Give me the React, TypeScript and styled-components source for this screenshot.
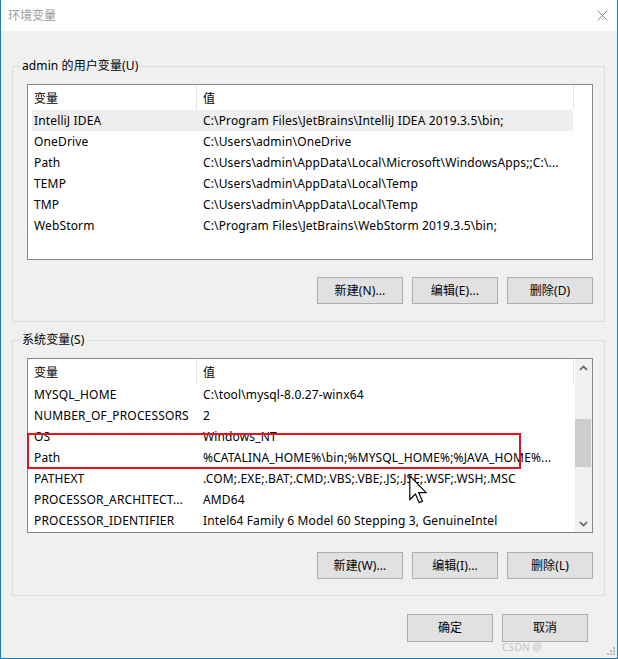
import React from 'react';
import styled, { createGlobalStyle } from 'styled-components';

const GlobalStyle = createGlobalStyle`
  html, body { margin: 0; padding: 0; background: #ffffff; }
  body {
    font-family: "Noto Sans", "Noto Sans CJK SC", sans-serif;
    font-size: 12px;
    color: #000;
  }
  * { box-sizing: border-box; }
`;

const Window = styled.div`
  position: relative;
  width: 618px;
  height: 659px;
  border: 1px solid #1e7dc0;
  border-top: none;
  background: #f0f0f0;
  display: flex;
  flex-direction: column;
  overflow: hidden;
`;

const TitleBar = styled.div`
  flex: none;
  height: 31px;
  background: #ffffff;
  display: flex;
  align-items: center;
  justify-content: space-between;
  padding: 0 9px 0 7px;
`;

const Title = styled.span`
  color: #9a9a9a;
  font-size: 12px;
  line-height: 16px;
`;

const Body = styled.div`
  flex: 1;
  display: flex;
  flex-direction: column;
  padding: 27px 12px 0 11px;
`;

const Group = styled.fieldset<{ $gapTop?: number }>`
  margin: ${(p) => p.$gapTop ?? 0}px 0 0 0;
  padding: 0;
  border: 1px solid #dcdcdc;
  min-width: 0;
`;

const Legend = styled.legend`
  margin-left: 7px;
  padding: 0 2px;
  line-height: 16px;
  font-size: 12px;
  letter-spacing: 0.1px;
`;

const GroupContent = styled.div<{ $padBottom: number }>`
  padding: 10px 11px ${(p) => p.$padBottom}px 14px;
  display: flex;
  flex-direction: column;
`;

const ListBox = styled.div<{ $height: number }>`
  position: relative;
  height: ${(p) => p.$height}px;
  border: 1px solid #828790;
  background: #ffffff;
  display: flex;
`;

const ListMain = styled.div`
  flex: 1;
  display: flex;
  flex-direction: column;
  overflow: hidden;
`;

const HeaderRow = styled.div`
  flex: none;
  height: 25px;
  display: grid;
  grid-template-columns: 169px 377px;
`;

const HeaderCell = styled.div`
  border-right: 1px solid #e5e5e5;
  padding-left: 6px;
  display: flex;
  align-items: center;
  white-space: nowrap;
`;

const Row = styled.div<{ $selected?: boolean }>`
  flex: none;
  height: 21px;
  margin-left: 4px;
  width: 541px;
  display: grid;
  grid-template-columns: 169px 1fr;
  align-items: center;
  background: ${(p) => (p.$selected ? '#efefef' : 'transparent')};
`;

const Cell = styled.div`
  padding-left: 2px;
  white-space: nowrap;
  overflow: hidden;
  line-height: 21px;
  letter-spacing: 0.14px;
`;

const ScrollBar = styled.div`
  flex: none;
  width: 17px;
  margin-left: 1px;
  background: #f0f0f0;
  display: flex;
  flex-direction: column;
`;

const ScrollArrow = styled.div`
  flex: none;
  height: 17px;
  display: flex;
  align-items: center;
  justify-content: center;
`;

const ScrollTrack = styled.div`
  flex: 1;
  display: flex;
  flex-direction: column;
`;

const ScrollThumb = styled.div<{ $top: number; $size: number }>`
  margin-top: ${(p) => p.$top}px;
  height: ${(p) => p.$size}px;
  margin-right: 1px;
  background: #cdcdcd;
`;

const ButtonRow = styled.div<{ $gapTop: number }>`
  margin-top: ${(p) => p.$gapTop}px;
  display: flex;
  justify-content: flex-end;
  gap: 9px;
`;

const Button = styled.button<{ $h?: number }>`
  width: 86px;
  height: ${(p) => p.$h ?? 27}px;
  margin: 0;
  padding: 0;
  background: #e1e1e1;
  border: 1px solid #adadad;
  border-radius: 0;
  font-family: "Noto Sans", "Noto Sans CJK SC", sans-serif;
  font-size: 12px;
  color: #000;
  line-height: 1;
  letter-spacing: 0.1px;
`;

const FooterRow = styled.div`
  margin-top: 18px;
  margin-right: 17px;
  display: flex;
  justify-content: flex-end;
  gap: 9px;
`;

const Highlight = styled.div`
  position: absolute;
  left: -1px;
  top: 74px;
  width: 494px;
  height: 36px;
  border: 2px solid #e8121f;
  pointer-events: none;
`;

const Cursor = styled.svg`
  position: absolute;
  left: 408px;
  top: 475px;
`;

const Watermark = styled.span`
  position: absolute;
  left: 501px;
  top: 641px;
  font-size: 10px;
  line-height: 12px;
  color: #c4c4c4;
  letter-spacing: 0.3px;
`;

const Grip = styled.svg`
  position: absolute;
  right: 2px;
  bottom: 3px;
`;

type Item = { name: string; value: string; selected?: boolean };

const userVars: Item[] = [
  { name: 'IntelliJ IDEA', value: 'C:\\Program Files\\JetBrains\\IntelliJ IDEA 2019.3.5\\bin;', selected: true },
  { name: 'OneDrive', value: 'C:\\Users\\admin\\OneDrive' },
  { name: 'Path', value: 'C:\\Users\\admin\\AppData\\Local\\Microsoft\\WindowsApps;;C:\\...' },
  { name: 'TEMP', value: 'C:\\Users\\admin\\AppData\\Local\\Temp' },
  { name: 'TMP', value: 'C:\\Users\\admin\\AppData\\Local\\Temp' },
  { name: 'WebStorm', value: 'C:\\Program Files\\JetBrains\\WebStorm 2019.3.5\\bin;' },
];

const sysVars: Item[] = [
  { name: 'MYSQL_HOME', value: 'C:\\tool\\mysql-8.0.27-winx64' },
  { name: 'NUMBER_OF_PROCESSORS', value: '2' },
  { name: 'OS', value: 'Windows_NT' },
  { name: 'Path', value: '%CATALINA_HOME%\\bin;%MYSQL_HOME%;%JAVA_HOME%...' },
  { name: 'PATHEXT', value: '.COM;.EXE;.BAT;.CMD;.VBS;.VBE;.JS;.JSE;.WSF;.WSH;.MSC' },
  { name: 'PROCESSOR_ARCHITECT...', value: 'AMD64' },
  { name: 'PROCESSOR_IDENTIFIER', value: 'Intel64 Family 6 Model 60 Stepping 3, GenuineIntel' },
];

const Chevron = ({ up }: { up: boolean }) => (
  <svg width="9" height="6" viewBox="0 0 9 6">
    <path
      d={up ? 'M1 5 L4.5 1.5 L8 5' : 'M1 1 L4.5 4.5 L8 1'}
      fill="none"
      stroke="#606060"
      strokeWidth="1.6"
    />
  </svg>
);

const VarList = ({ items, height, scroll, children }: { items: Item[]; height: number; scroll?: boolean; children?: React.ReactNode }) => (
  <ListBox $height={height}>
    <ListMain>
      <HeaderRow>
        <HeaderCell>变量</HeaderCell>
        <HeaderCell>值</HeaderCell>
      </HeaderRow>
      {items.map((it) => (
        <Row key={it.name + it.value} $selected={it.selected}>
          <Cell>{it.name}</Cell>
          <Cell>{it.value}</Cell>
        </Row>
      ))}
    </ListMain>
    {scroll && (
      <ScrollBar>
        <ScrollArrow><Chevron up /></ScrollArrow>
        <ScrollTrack>
          <ScrollThumb $top={43} $size={48} />
        </ScrollTrack>
        <ScrollArrow><Chevron up={false} /></ScrollArrow>
      </ScrollBar>
    )}
    {children}
  </ListBox>
);

export default function App() {
  return (
    <>
      <GlobalStyle />
      <Window>
        <TitleBar>
          <Title>环境变量</Title>
          <svg width="11" height="11" viewBox="0 0 11 11">
            <path d="M0.5 0.5 L10.5 10.5 M10.5 0.5 L0.5 10.5" stroke="#8a8a8a" strokeWidth="1" fill="none" />
          </svg>
        </TitleBar>
        <Body>
          <Group>
            <Legend>admin 的用户变量(U)</Legend>
            <GroupContent $padBottom={17}>
              <VarList items={userVars} height={176} />
              <ButtonRow $gapTop={17}>
                <Button>新建(N)...</Button>
                <Button>编辑(E)...</Button>
                <Button>删除(D)</Button>
              </ButtonRow>
            </GroupContent>
          </Group>
          <Group $gapTop={10}>
            <Legend>系统变量(S)</Legend>
            <GroupContent $padBottom={16}>
              <VarList items={sysVars} height={175} scroll>
                <Highlight />
              </VarList>
              <ButtonRow $gapTop={19}>
                <Button>新建(W)...</Button>
                <Button>编辑(I)...</Button>
                <Button>删除(L)</Button>
              </ButtonRow>
            </GroupContent>
          </Group>
          <FooterRow>
            <Button $h={28}>确定</Button>
            <Button $h={28}>取消</Button>
          </FooterRow>
        </Body>
        <Cursor width="18" height="29" viewBox="0 0 12 19.5">
          <path
            d="M0.5 0.5 L0.5 16.5 L4.3 12.8 L6.8 18.6 L9 17.6 L6.5 11.9 L11.5 11.9 Z"
            fill="#ffffff"
            stroke="#000000"
            strokeWidth="0.8"
            strokeLinejoin="miter"
          />
        </Cursor>
        <Watermark>CSDN @</Watermark>
        <Grip width="8" height="8" viewBox="0 0 8 8">
          <rect x="6" y="0" width="2" height="2" fill="#b8b8b8" />
          <rect x="3" y="3" width="2" height="2" fill="#b8b8b8" />
          <rect x="6" y="3" width="2" height="2" fill="#b8b8b8" />
          <rect x="0" y="6" width="2" height="2" fill="#b8b8b8" />
          <rect x="3" y="6" width="2" height="2" fill="#b8b8b8" />
          <rect x="6" y="6" width="2" height="2" fill="#b8b8b8" />
        </Grip>
      </Window>
    </>
  );
}
